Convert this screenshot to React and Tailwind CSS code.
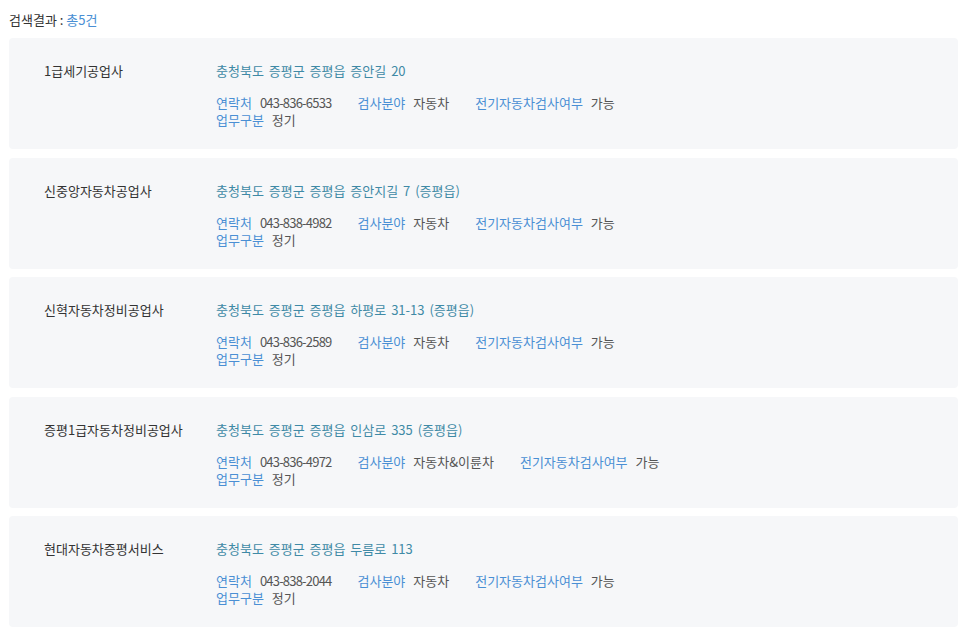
import React from "react";

const items = [
  { name: "1급세기공업사", addr: "충청북도 증평군 증평읍 증안길 20", tel: "043-836-6533", field: "자동차", ev: "가능", work: "정기" },
  { name: "신중앙자동차공업사", addr: "충청북도 증평군 증평읍 증안지길 7 (증평읍)", tel: "043-838-4982", field: "자동차", ev: "가능", work: "정기" },
  { name: "신혁자동차정비공업사", addr: "충청북도 증평군 증평읍 하평로 31-13 (증평읍)", tel: "043-836-2589", field: "자동차", ev: "가능", work: "정기" },
  { name: "증평1급자동차정비공업사", addr: "충청북도 증평군 증평읍 인삼로 335 (증평읍)", tel: "043-836-4972", field: "자동차&이륜차", ev: "가능", work: "정기" },
  { name: "현대자동차증평서비스", addr: "충청북도 증평군 증평읍 두름로 113", tel: "043-838-2044", field: "자동차", ev: "가능", work: "정기" },
];

function Pair({ label, value, last, num }) {
  return (
    <span className={last ? "" : "mr-[26px]"}>
      <span className="text-[#4a8fd4] mr-[8px]">{label}</span>
      <span className={num ? "text-[#555] tracking-[-0.8px]" : "text-[#555]"}>{value}</span>
    </span>
  );
}

export default function App() {
  return (
    <div
      className="bg-white w-[966px] min-h-[631px] text-[13px] leading-[17px] pl-[9px] pr-[8px]"
      style={{ fontFamily: '"Noto Sans CJK KR", "Noto Sans", sans-serif' }}
    >
      <div className="pt-[11px] h-[38px] text-[#333]">
        검색결과 : <span className="text-[#4a8fd4]">총5건</span>
      </div>
      <div className="flex flex-col gap-[8.5px]">
        {items.map((it) => (
          <div key={it.name} className="bg-[#f6f7f9] rounded-[4px] h-[111px] pl-[35px] pt-[24px]">
            <div className="flex">
              <div className="w-[172px] text-[#333]">{it.name}</div>
              <div className="flex flex-col">
                <div className="text-[#3f8aa6] [word-spacing:2px]">{it.addr}</div>
                <div className="mt-[15px] flex">
                  <Pair label="연락처" value={it.tel} num />
                  <Pair label="검사분야" value={it.field} />
                  <Pair label="전기자동차검사여부" value={it.ev} last />
                </div>
                <div className="flex">
                  <Pair label="업무구분" value={it.work} last />
                </div>
              </div>
            </div>
          </div>
        ))}
      </div>
    </div>
  );
}
